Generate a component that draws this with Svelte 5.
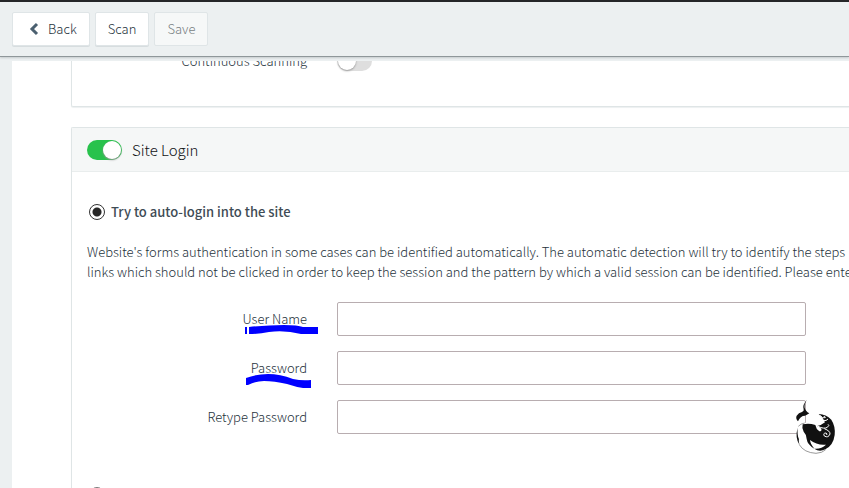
<script>
  let continuous = $state(false);
  let siteLogin = $state(true);
  let mode = $state('auto');
  let values = $state({ user: '', password: '', retype: '' });

  const fields = [
    { id: 'user', label: 'User Name', type: 'text' },
    { id: 'password', label: 'Password', type: 'password' },
    { id: 'retype', label: 'Retype Password', type: 'password' }
  ];
</script>

<div class="page">
  <header class="toolbar">
    <button type="button" class="btn back">
      <svg width="10" height="14" viewBox="0 0 10 14" aria-hidden="true">
        <path d="M8 2 3 7 8 12" fill="none" stroke="#4b6070" stroke-width="3" />
      </svg>
      Back
    </button>
    <button type="button" class="btn">Scan</button>
    <button type="button" class="btn" disabled>Save</button>
  </header>

  <main class="content">
    <section class="panel scanning">
      <div class="row">
        <label class="name" for="continuous">Continuous Scanning</label>
        <input id="continuous" class="switch" type="checkbox" role="switch" bind:checked={continuous} />
      </div>
    </section>

    <section class="panel">
      <div class="head">
        <input id="site-login" class="switch" type="checkbox" role="switch" bind:checked={siteLogin} />
        <label for="site-login">Site Login</label>
      </div>
      <div class="body">
        <label class="choice">
          <input type="radio" name="mode" value="auto" bind:group={mode} />
          <span>Try to auto-login into the site</span>
        </label>
        <p>
          Website's forms authentication in some cases can be identified automatically. The automatic detection will try to identify the steps<br />
          links which should not be clicked in order to keep the session and the pattern by which a valid session can be identified. Please enter
        </p>
        <div class="fields">
          {#each fields as field (field.id)}
            <div class="row">
              <label class="name" for={field.id}>
                {field.label}
                {#if field.id === 'user'}
                  <svg class="mark" width="74" height="10" viewBox="0 0 74 10" aria-hidden="true">
                    <path d="M0 2H2V9H0ZM4 2Q23 0 39 0 53 0 58 2H73V9H56Q40 5 24 7 14 9 4 9Z" fill="#00f" />
                  </svg>
                {:else if field.id === 'password'}
                  <svg class="mark" width="67" height="14" viewBox="0 0 67 14" aria-hidden="true">
                    <path d="M1 4Q12 0 23 0 35 0 48 5 57 7 66 6V14H58Q51 13 42 10 29 7 19 7 11 7 3 11H1Z" fill="#00f" />
                  </svg>
                {/if}
              </label>
              <input id={field.id} class="text" type={field.type} bind:value={values[field.id]} />
            </div>
          {/each}
        </div>
        <label class="choice">
          <input type="radio" name="mode" value="manual" bind:group={mode} aria-label="Manual login" />
        </label>
      </div>
      <svg class="logo" width="50" height="62" viewBox="0 0 150 186" aria-hidden="true">
        <path d="M49 56Q68 49 90 57 128 70 134 104 136 145 110 165 80 182 48 168 22 152 20 118 22 96 42 86L49 82Z" fill="#fff" />
        <path d="M51 14Q42 27 44 38 46 48 58 55 50 60 45 62 31 62 24 79 16 70 20 62 26 53 36 51 43 48 41 43 36 30 51 14Z" fill="#111" />
        <path d="M38 88Q57 83 76 90 78 102 88 109 96 109 94 101 90 96 82 93 94 91 105 82 98 66 86 57 108 58 124 74 137 94 134 120 130 151 106 163 88 172 73 161 94 163 108 149 82 152 60 135 61 147 73 161 52 149 50 132 50 119 41 110 35 98 38 88Z" fill="#111" />
        <path d="M23 98Q14 128 29 151 25 137 27 133 21 120 23 98Z" fill="#111" />
        <path d="M25 94Q32 86 44 84M28 149Q42 173 78 175 97 174 107 164" fill="none" stroke="#666" stroke-width="2" />
        <path d="M91 61Q96 72 106 68 105 63 101 64M98 76Q110 79 114 72M84 94Q102 103 112 97 120 90 114 88M103 101Q121 108 120 117 115 130 103 123 98 114 108 114 113 116 110 120" fill="none" stroke="#fff" stroke-width="3" />
      </svg>
    </section>
  </main>
</div>

<style>
  :global(body) {
    background: #ecf0f1;
    overflow: hidden;
  }

  .page {
    font: 300 13px/20px "Noto Sans CJK SC", "Noto Sans", sans-serif;
    color: #25323b;
    height: 100vh;
    overflow: hidden;
  }

  .toolbar {
    position: relative;
    z-index: 1;
    display: flex;
    gap: 5px;
    height: 44px;
    padding: 10px 12px 0;
    border-top: 2px solid #252628;
    border-bottom: 1px solid #8f979a;
    background: #ecf0f1;
    box-shadow: 0 1px 2px #c5cacc, 0 4px 0 #ecf0f1;
  }

  .btn {
    box-sizing: border-box;
    display: flex;
    align-items: center;
    gap: 9px;
    height: 34px;
    padding: 0 12px;
    border: 1px solid #dfe5e7;
    border-radius: 2px;
    background: #fff;
    box-shadow: 0 1px 0 #d7dddf;
    color: #25323b;
    font: inherit;
  }

  .btn.back {
    padding-left: 16px;
  }

  .btn:disabled {
    background: #f6f8f8;
    box-shadow: none;
    color: #787f83;
  }

  .content {
    min-height: 100vh;
    margin: -6px 0 0 12px;
    padding-left: 59px;
    background: #fff;
  }

  .panel {
    position: relative;
    border: 1px solid #dfe5e6;
    border-right: 0;
    border-radius: 2px 0 0 2px;
    box-shadow: 0 1px 1px #edf0f1;
  }

  .scanning {
    margin-bottom: 20px;
    padding: 0 15px 35px;
    border-top: 0;
  }

  .head {
    display: flex;
    align-items: center;
    gap: 10px;
    height: 43px;
    padding: 0 15px;
    border-bottom: 1px solid #e9eded;
    background: #f5f7f7;
    color: #101214;
    font-size: 15px;
  }

  .body {
    padding: 30px 15px;
    overflow: hidden;
  }

  .choice {
    display: flex;
    align-items: center;
    gap: 6px;
    height: 20px;
    padding-left: 2px;
    color: #3f4c55;
    font-weight: 500;
  }

  .choice input {
    appearance: none;
    box-sizing: border-box;
    width: 16px;
    height: 16px;
    margin: 0;
    border: 1px solid #777;
    border-radius: 50%;
    background: #fff;
  }

  .choice input:checked {
    border-color: #333;
    background: radial-gradient(circle, #262626 4px, #fff 5px);
  }

  p {
    margin: 20px 0;
    white-space: nowrap;
  }

  .fields {
    display: flex;
    flex-direction: column;
    gap: 15px;
    margin-bottom: 51px;
  }

  .row {
    display: flex;
    align-items: center;
    gap: 30px;
  }

  .name {
    position: relative;
    flex: 0 0 220px;
    text-align: right;
  }

  .mark {
    position: absolute;
    top: 16px;
    left: 158px;
  }

  .text {
    box-sizing: border-box;
    flex: 1;
    min-width: 0;
    height: 34px;
    margin-right: 28px;
    padding: 6px 12px;
    border: 1px solid #b8adb0;
    border-radius: 2px;
    background: #fff;
    color: inherit;
    font: inherit;
  }

  .switch {
    appearance: none;
    width: 35px;
    height: 20px;
    margin: 0;
    border-radius: 10px;
    background: #dedede;
  }

  .switch::before {
    content: "";
    display: block;
    width: 18px;
    height: 18px;
    margin: 1px;
    border-radius: 50%;
    background: #fff;
    box-shadow: 0 1px 2px #999;
  }

  .switch:checked {
    background: #28c24c;
  }

  .switch:checked::before {
    margin-left: 16px;
  }

  .logo {
    position: absolute;
    top: 267px;
    right: 9px;
  }
</style>
